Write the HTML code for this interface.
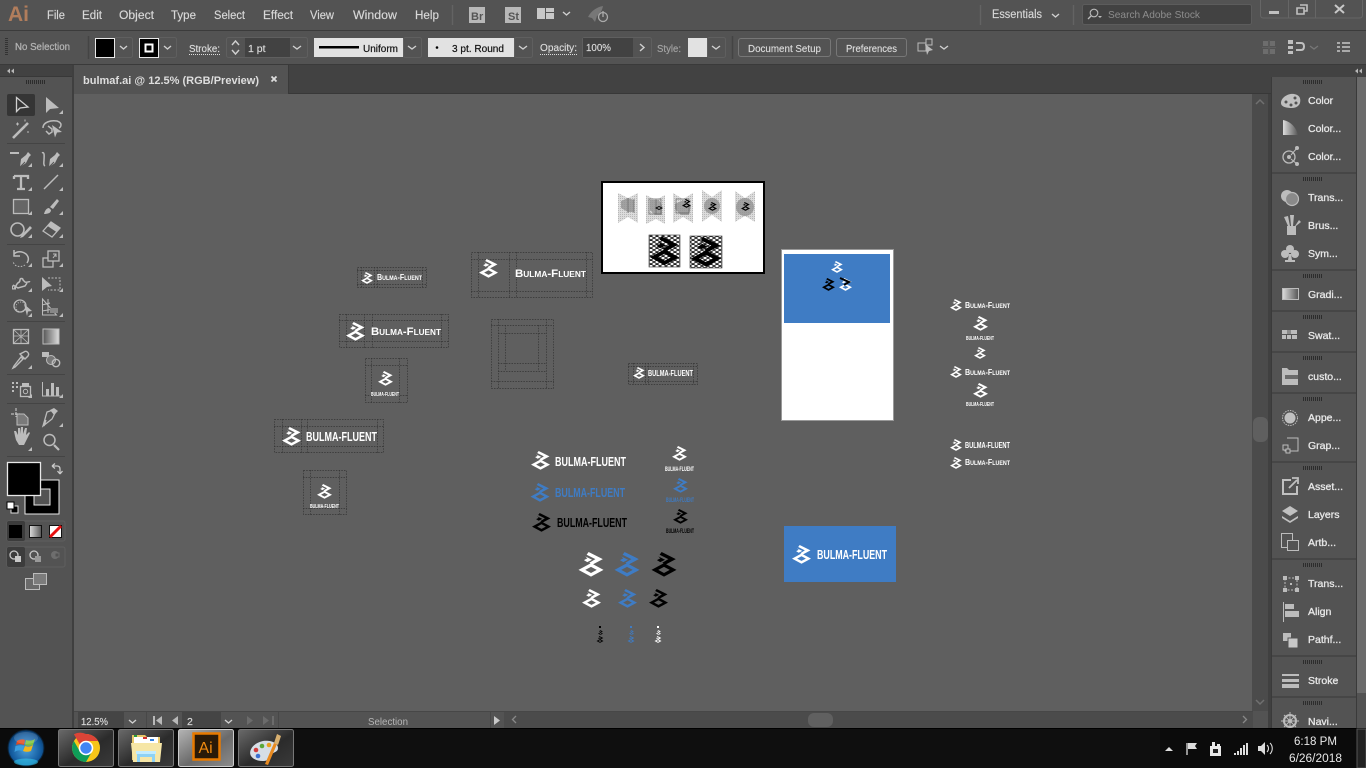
<!DOCTYPE html>
<html><head><meta charset="utf-8"><style>
html,body{margin:0;padding:0;background:#535353;overflow:hidden;width:1366px;height:768px}
svg{display:block}
text{font-family:"Liberation Sans",sans-serif;white-space:pre}
.m{font-size:11.5px;fill:#d8d8d8;stroke:#d8d8d8;stroke-width:.15}
.c{font-size:10.5px;fill:#dcdcdc;stroke:#dcdcdc;stroke-width:.15}
.k{font-size:10.5px;fill:#111;stroke:#111;stroke-width:.2}
.p{font-size:10.5px;fill:#e8e8e8;stroke:#e8e8e8;stroke-width:.3}
.l{font-weight:bold}
.sc{font-variant:small-caps;font-weight:bold}
.g{fill:none;stroke:#343434;stroke-width:.7;stroke-dasharray:1.5 1.2}
.i{fill:none;stroke:#bcbcbc;stroke-width:1.5}
.f{fill:#bcbcbc}
.d{fill:none;stroke:#d0d0d0;stroke-width:1.4}
.hd{stroke:#2c2c2c;stroke-width:4;stroke-dasharray:1 1;fill:none}
</style></head><body>
<svg width="1366" height="768" viewBox="0 0 1366 768" xmlns="http://www.w3.org/2000/svg">
<defs>
<symbol id="m" viewBox="0 0 74 74"><path fill-rule="evenodd" d="M0 53L37 33 74 53 37 73ZM20 53L37 44 54 53 37 62Z"/><path d="M30 0L72 21 42 37 32 32 50 21 24 8ZM20 13L40 23 26 30 16 24 26 19Z"/></symbol>
<pattern id="hatch" width="2" height="2" patternUnits="userSpaceOnUse"><rect width="2" height="2" fill="#dcdcdc"/><rect width="1" height="1" fill="#b8b8b8"/></pattern>
<pattern id="chk" width="6" height="4" patternUnits="userSpaceOnUse"><rect width="6" height="4" fill="#fff"/><path d="M0 2L3 0 6 2 3 4Z" fill="none" stroke="#222" stroke-width="1"/></pattern>
<linearGradient id="gr" x1="0" x2="1"><stop offset="0" stop-color="#ddd"/><stop offset="1" stop-color="#555"/></linearGradient>
<linearGradient id="gr2" x1="0" x2="1"><stop offset="0" stop-color="#555"/><stop offset="1" stop-color="#ddd"/></linearGradient>
<linearGradient id="tb" x1="0" y1="0" x2="1" y2="1"><stop offset="0" stop-color="#6a6a6a"/><stop offset=".55" stop-color="#2b2b2b"/><stop offset="1" stop-color="#3a3a3a"/></linearGradient>
<linearGradient id="tb2" x1="0" y1="0" x2="1" y2="1"><stop offset="0" stop-color="#b4b4b4"/><stop offset=".55" stop-color="#6a6a6a"/><stop offset="1" stop-color="#8c8c8c"/></linearGradient>
<radialGradient id="orb" cx=".5" cy=".55" r=".6"><stop offset="0" stop-color="#4aa0dc"/><stop offset=".7" stop-color="#125a9e"/><stop offset="1" stop-color="#0b2f55"/></radialGradient>
</defs>

<!-- base -->
<rect width="1366" height="768" fill="#535353"/>
<rect y="30" width="1366" height="1" fill="#3b3b3b"/>
<rect y="64" width="1366" height="1" fill="#3a3a3a"/>
<rect x="72" y="65" width="1199" height="29" fill="#424242"/>
<rect x="72" y="93" width="1199" height="1" fill="#383838"/>
<rect x="74" y="65" width="214" height="29" fill="#535353"/>
<rect x="288" y="65" width="1" height="29" fill="#3a3a3a"/>
<rect x="74" y="94" width="1179" height="617" fill="#5f5f5f"/>
<rect x="72" y="65" width="2" height="663" fill="#3f3f3f"/>
<rect x="0" y="65" width="72" height="12" fill="#424242"/>
<rect x="0" y="76" width="72" height="1" fill="#383838"/>
<rect x="1252" y="94" width="16" height="617" fill="#4b4b4b"/>
<rect x="1268" y="94" width="3" height="634" fill="#404040"/>
<rect x="1253" y="417" width="15" height="25" rx="6" fill="#5f5f5f"/>
<path d="M1256 104l4-4 4 4M1256 700l4 4 4-4" fill="none" stroke="#707070" stroke-width="1.5"/>
<rect x="1271" y="65" width="95" height="12" fill="#424242"/>
<rect x="1271" y="77" width="86" height="651" fill="#535353"/>
<rect x="1271" y="77" width="1" height="651" fill="#3a3a3a"/>
<rect x="1356" y="77" width="1" height="651" fill="#3a3a3a"/>
<rect x="1357" y="77" width="9" height="616" fill="#6b6b6b"/>
<path d="M1272 173h84M1272 270h84M1272 311h84M1272 352h84M1272 393h84M1272 462h84M1272 559h84M1272 656h84M1272 697h84" stroke="#3a3a3a"/>

<!-- top bar -->
<text x="8" y="21" font-size="21" fill="#b17d5c" style="font-weight:bold">Ai</text>
<text class="m" x="47" y="19" textLength="18" lengthAdjust="spacingAndGlyphs">File</text>
<text class="m" x="82" y="19" textLength="20" lengthAdjust="spacingAndGlyphs">Edit</text>
<text class="m" x="119" y="19" textLength="35" lengthAdjust="spacingAndGlyphs">Object</text>
<text class="m" x="171" y="19" textLength="25" lengthAdjust="spacingAndGlyphs">Type</text>
<text class="m" x="214" y="19" textLength="31" lengthAdjust="spacingAndGlyphs">Select</text>
<text class="m" x="263" y="19" textLength="30" lengthAdjust="spacingAndGlyphs">Effect</text>
<text class="m" x="310" y="19" textLength="24" lengthAdjust="spacingAndGlyphs">View</text>
<text class="m" x="353" y="19" textLength="44" lengthAdjust="spacingAndGlyphs">Window</text>
<text class="m" x="415" y="19" textLength="24" lengthAdjust="spacingAndGlyphs">Help</text>
<path d="M452.5 5v20M980.5 5v20M1073.5 5v20" stroke="#636363" stroke-width="1.5"/>
<rect x="469" y="7" width="16" height="16" fill="#b8b8b8"/><text x="471" y="20" font-size="11" fill="#555" style="font-weight:bold">Br</text>
<rect x="505" y="7" width="16" height="16" fill="#b8b8b8"/><text x="508" y="20" font-size="11" fill="#555" style="font-weight:bold">St</text>
<path d="M537 8h8v11h-8zM546 8h8v4h-8zM546 13h8v6h-8z" fill="#c8c8c8"/>
<path d="M563 12l3.500 3 3.500-3" class="d"/>
<path d="M588 17c3-6 9-10 15-11-1 5-3 8-6 10l-2 6-3-4-4-1z" fill="#777"/>
<circle cx="603" cy="17" r="4.500" fill="#535353" stroke="#aaa" stroke-width="1.300"/><path d="M603 11v6" stroke="#aaa" stroke-width="1.300"/>
<text class="m" x="992" y="18" textLength="50" lengthAdjust="spacingAndGlyphs">Essentials</text>
<path d="M1052 14l3.500 3 3.500-3" class="d"/>
<rect x="1082.500" y="4.500" width="169" height="20" rx="2" fill="#424242" stroke="#5c5c5c"/>
<circle cx="1094" cy="13" r="3.800" fill="none" stroke="#bbb" stroke-width="1.100"/><path d="M1091 16l-3 3" stroke="#bbb" stroke-width="1.300"/><path d="M1098 16h4l-2 2z" fill="#bbb"/>
<text x="1108" y="18" font-size="10.500" fill="#8d8d8d" textLength="92" lengthAdjust="spacingAndGlyphs">Search Adobe Stock</text>
<path d="M1260.500 0v15q0 3 3 3h96q3 0 3-3V0M1288.500 0v18M1315.500 0v18" fill="none" stroke="#666"/>
<rect x="1269" y="11" width="10" height="3" fill="#c0c0c0"/>
<path d="M1297 8h7v6h-7zM1300 5h7v6h-3" fill="none" stroke="#c0c0c0" stroke-width="1.600"/>
<path d="M1335 5l9 8M1344 5l-9 8" stroke="#c8c8c8" stroke-width="2"/>

<!-- control bar -->
<path d="M6.500 38v18" stroke="#333" stroke-width="3" stroke-dasharray="1 1"/>
<text x="15" y="50" font-size="10.500" fill="#b4b4b4" stroke="#b4b4b4" stroke-width=".25" textLength="55" lengthAdjust="spacingAndGlyphs">No Selection</text>
<path d="M88.500 36v23M732.500 36v23" stroke="#444" stroke-width="1.500"/>
<rect x="114.500" y="37.500" width="18" height="20" rx="2" fill="none" stroke="#5f5f5f"/>
<rect x="95.500" y="38.500" width="19" height="19" fill="#000" stroke="#e8e8e8"/>
<path d="M120 46l3.500 3 3.500-3" class="d"/>
<rect x="158.500" y="37.500" width="18" height="20" rx="2" fill="none" stroke="#5f5f5f"/>
<rect x="139.500" y="38.500" width="19" height="19" fill="#000" stroke="#e8e8e8"/>
<rect x="145.500" y="44.500" width="7" height="7" fill="none" stroke="#fff" stroke-width="2"/>
<path d="M164 46l3.500 3 3.500-3" class="d"/>
<text class="c" x="189" y="52" textLength="31" lengthAdjust="spacingAndGlyphs">Stroke:</text>
<path d="M189 54.500h31M540 54.500h37" stroke="#ddd" stroke-dasharray="1 1"/>
<rect x="226.500" y="37.500" width="81" height="20" rx="2" fill="#535353" stroke="#5f5f5f"/>
<rect x="245" y="38" width="45" height="19" fill="#424242"/>
<path d="M232 45l3.500-4 3.500 4M232 50l3.500 4 3.500-4M293 46l4 3 4-3" class="d"/>
<text class="c" x="248" y="52">1 pt</text>
<rect x="314" y="38" width="89" height="19" fill="#e2e2e2"/>
<rect x="319" y="46" width="40" height="2.500" fill="#000"/>
<text class="k" x="363" y="52" textLength="35" lengthAdjust="spacingAndGlyphs">Uniform</text>
<rect x="403.500" y="37.500" width="18" height="20" rx="2" fill="none" stroke="#5f5f5f"/>
<path d="M408 46l4 3 4-3" class="d"/>
<rect x="428" y="38" width="86" height="19" fill="#e2e2e2"/>
<circle cx="437" cy="47.500" r="1.300" fill="#000"/>
<text class="k" x="452" y="52" textLength="52" lengthAdjust="spacingAndGlyphs">3 pt. Round</text>
<rect x="514.500" y="37.500" width="18" height="20" rx="2" fill="none" stroke="#5f5f5f"/>
<path d="M519 46l4 3 4-3" class="d"/>
<text class="c" x="540" y="51" textLength="37" lengthAdjust="spacingAndGlyphs">Opacity:</text>
<rect x="582.500" y="37.500" width="69" height="20" rx="2" fill="#535353" stroke="#5f5f5f"/>
<rect x="583" y="38" width="50" height="19" fill="#424242"/>
<text class="c" x="586" y="51" textLength="25" lengthAdjust="spacingAndGlyphs">100%</text>
<path d="M640 44l4 3.500-4 3.500" class="d"/>
<text x="657" y="52" font-size="10.500" fill="#a5a5a5" stroke="#a5a5a5" stroke-width=".15" textLength="24" lengthAdjust="spacingAndGlyphs">Style:</text>
<rect x="688" y="38" width="19" height="19" fill="#e2e2e2"/>
<rect x="707.500" y="37.500" width="18" height="20" rx="2" fill="none" stroke="#5f5f5f"/>
<path d="M712 46l4 3 4-3" class="d"/>
<rect x="738.500" y="38.500" width="92" height="18" rx="2.500" fill="none" stroke="#777"/>
<text class="c" x="748" y="52" textLength="73" lengthAdjust="spacingAndGlyphs">Document Setup</text>
<rect x="836.500" y="38.500" width="70" height="18" rx="2.500" fill="none" stroke="#777"/>
<text class="c" x="846" y="52" textLength="51" lengthAdjust="spacingAndGlyphs">Preferences</text>
<path d="M918 43h8v8h-8zM926 39h6v6h-6z" fill="none" stroke="#bbb"/><path d="M925 44l8 6-4 1-2 4z" fill="#bbb"/>
<path d="M940 46l4 3 4-3" class="d"/>
<path d="M1263 41h5v5h-5zM1270 41h5v5h-5zM1263 49h5v5h-5zM1270 49h5v5h-5z" fill="#6d6d6d"/><path d="M1262 47.500h14M1269 40v15" stroke="#5f5f5f"/>
<path d="M1288 40h5v4h-5zM1288 46h5v3h-5zM1288 51h5v3h-5z" fill="#c0c0c0"/><path d="M1296 43h5q3 0 3 3.500t-3 3.500h-5" fill="none" stroke="#c0c0c0" stroke-width="2"/>
<path d="M1310 46l4 3 4-3" fill="none" stroke="#777" stroke-width="1.300"/>
<path d="M1337 43h3M1342 43h8M1337 47h3M1342 47h8M1337 51h3M1342 51h8" stroke="#c8c8c8" stroke-width="1.500"/>

<!-- tab row -->
<text x="83" y="84" font-size="11" fill="#dedede" style="font-weight:bold" textLength="176" lengthAdjust="spacingAndGlyphs">bulmaf.ai @ 12.5% (RGB/Preview)</text>
<path d="M271.500 76.500l5 5M276.500 76.500l-5 5" stroke="#dedede" stroke-width="1.800"/>
<path d="M10 68.500l-3 2.500 3 2.500zM14 68.500l-3 2.500 3 2.500zM1358 68.500l-3 2.500 3 2.500zM1362 68.500l-3 2.500 3 2.500z" fill="#b8b8b8"/>
<path class="hd" d="M26 82h19"/>

<!-- toolbox -->
<rect x="7" y="94" width="28" height="22" rx="2" fill="#353535"/>
<path d="M16.500 97.500v14l3.500-3.500 8-1z" fill="none" stroke="#d0d0d0" stroke-width="1.300"/>
<path d="M46 97v16l4-4 9-1z" fill="#bcbcbc"/>
<path d="M13 138l12-12" stroke="#bcbcbc" stroke-width="2.600"/><path d="M25 126l3-3" stroke="#bcbcbc" stroke-width="2.600"/><path d="M16 124h3M17.500 122.500v3M27 132h2M25 119.500v2" stroke="#bcbcbc"/>
<path d="M43 128c0-6 8-8 14-7 6 2 4 6 2 7M48 126l4 3v3l-3 2-3-3" class="i" stroke-width="1.200"/><path d="M52 125l10 7-5 .5-2 5z" fill="#bcbcbc"/>
<path d="M10 153h9" stroke="#bcbcbc" stroke-width="2"/><path d="M20 167l1-8 5-4 2-3 3 3-2 2-3 6z" fill="#bcbcbc"/><path d="M20 167l5-5" stroke="#535353"/>
<path d="M42 153c3-2 2 5 2 7s-1 5 1 6" class="i" stroke-width="1.200"/><path d="M49 167l1-8 5-4 2-3 3 3-2 2-3 6z" fill="#bcbcbc"/><path d="M49 167l5-5" stroke="#535353"/>
<path d="M14 176h14v3M21 176v13M17 189h8M14 176v3" fill="none" stroke="#bcbcbc" stroke-width="2.300"/>
<path d="M44 189l14-14" stroke="#bcbcbc" stroke-width="1.500"/>
<rect x="13.500" y="199.500" width="15" height="14" fill="#666" stroke="#bcbcbc" stroke-width="1.300"/>
<path d="M44 214c1-4 3-6 5-6l2 2c0 3-3 4-7 4zM50 207l7-8 2 2-6 8z" fill="#bcbcbc"/>
<circle cx="17.500" cy="229.500" r="6.500" fill="none" stroke="#bcbcbc" stroke-width="1.600"/><path d="M21 236l9-10 2 2-9 9-3 1z" fill="#bcbcbc"/>
<path d="M43 231l8-9 9 6-8 9z" fill="none" stroke="#bcbcbc" stroke-width="1.300"/><path d="M47.500 226l4-4 9 6-4 4z" fill="#bcbcbc"/>
<path d="M14 254c3-3 8-3 12 0 3 3 3 6 1 9" class="i"/><path d="M14 250v6h6" class="i" stroke-width="1.300"/><path d="M25 265c-3 2-7 2-10 0-1-1-2-3-2-4" fill="none" stroke="#bcbcbc" stroke-dasharray="1.500 1.500"/>
<rect x="43" y="258" width="10" height="9" fill="none" stroke="#bcbcbc" stroke-width="1.300"/><rect x="48" y="251" width="11" height="10" fill="#535353" stroke="#bcbcbc" stroke-width="1.300"/><path d="M53 258l3-4M53 254h3v3" fill="none" stroke="#bcbcbc"/>
<path d="M14 289l3-5c1-2 3-1 3-4 0-2 3-2 3 0l2 2c2 1 4-1 5 0" class="i"/><path d="M13 285l5 3 7-2 2-3" class="i" stroke-width="1"/><rect x="12.500" y="286" width="3" height="3" fill="none" stroke="#bcbcbc"/>
<path d="M42 277v14l5-4 5-1z" fill="#bcbcbc"/><path d="M48 278h12v12h-12" fill="none" stroke="#bcbcbc" stroke-dasharray="2 1.500"/>
<circle cx="20" cy="306" r="6" fill="none" stroke="#bcbcbc" stroke-width="1.300"/><circle cx="21" cy="307" r="5" fill="none" stroke="#bcbcbc" stroke-dasharray="1 1.500"/><path d="M24 304l8 7-4 .5-1 4.500z" fill="#bcbcbc"/>
<path d="M42.500 299v16h14l-14-16zM42 305l8-2M42 311l12-2M48 299v14" fill="none" stroke="#bcbcbc"/><path d="M50 308h8v5h-8z" fill="#888"/>
<rect x="13.500" y="329.500" width="15" height="14" fill="none" stroke="#bcbcbc" stroke-width="1.300"/><path d="M13 336h16M21 329v15M14 330l14 13M28 330l-14 13" stroke="#bcbcbc" stroke-width=".8"/>
<rect x="43" y="329" width="16" height="15" fill="url(#gr2)" stroke="#bcbcbc"/>
<path d="M14 366l-1 2 2-1 8-8-2-2zM20 354l5 5 3-3c2-3-2-6-4-4z" fill="none" stroke="#bcbcbc" stroke-width="1.400"/>
<path d="M42 352h7v5h-7z" fill="#bcbcbc"/><circle cx="51" cy="360" r="4.500" fill="#777" stroke="#bcbcbc"/><circle cx="56" cy="363" r="3.700" fill="none" stroke="#bcbcbc" stroke-width="1.400"/>
<rect x="20.500" y="386.500" width="10" height="10" fill="none" stroke="#bcbcbc" stroke-width="1.300"/><circle cx="25.500" cy="391.500" r="2.200" fill="none" stroke="#bcbcbc"/><path d="M22 383h7v3h-7zM12 382h2v2h-2zM16 382h2v2h-2zM12 386h2v2h-2zM16 386h2v2h-2zM12 390h2v2h-2z" fill="#bcbcbc"/>
<path d="M42.500 382v14h18" fill="none" stroke="#bcbcbc"/><path d="M46 389h3v7h-3zM51 383h3v13h-3zM56 387h3v9h-3z" fill="#bcbcbc"/>
<path d="M11 414h9M16 408v9" stroke="#bcbcbc" stroke-width="1.200" stroke-dasharray="3 1"/><path d="M17 414h7l4 4v7H17z" fill="#7a7a7a" stroke="#bcbcbc"/>
<path d="M43 426l4-14 6-2 2 3-3 6zM46 420l-2 6" fill="none" stroke="#bcbcbc" stroke-width="1.300"/><path d="M50 410l4-2 4 3-4 4z" fill="#bcbcbc"/>
<path d="M15 436l-1-5 2 0 2 4v-7h2v6l1-7h2l0 7 2-6h2l-1 7 3-3 1 1-4 8-2 4h-5l-3-5z" fill="#bcbcbc"/>
<circle cx="49.500" cy="440" r="5.500" fill="none" stroke="#bcbcbc" stroke-width="1.500"/><path d="M54 445l5 5" stroke="#bcbcbc" stroke-width="2.200"/>
<path d="M32 167v-4l-4 4zM63 167v-4l-4 4zM32 191v-4l-4 4zM63 191v-4l-4 4zM32 215v-4l-4 4zM63 215v-4l-4 4zM32 238v-4l-4 4zM63 238v-4l-4 4zM32 267v-4l-4 4zM63 267v-4l-4 4zM32 292v-4l-4 4zM63 292v-4l-4 4zM32 317v-4l-4 4zM63 317v-4l-4 4zM32 369v-4l-4 4zM32 398v-4l-4 4zM63 398v-4l-4 4zM63 427v-4l-4 4zM32 451v-4l-4 4zM63 114v-4l-4 4z" fill="#bcbcbc"/>
<path d="M7 143.500h58M7 244.500h58M7 321.500h58M7 374.500h58M7 403.500h58M7 456.500h58" stroke="#444"/>
<!-- colour -->
<rect x="25" y="480" width="34" height="34" fill="#000" stroke="#e8e8e8"/>
<rect x="34" y="489" width="16" height="16" fill="#535353" stroke="#e8e8e8"/>
<rect x="7.500" y="462.500" width="33" height="33" fill="#000" stroke="#e8e8e8" stroke-width="1.300"/>
<path d="M52 466h5q3 0 3 3v5M52 466l3-2.500M52 466l3 2.500M60 474l-2.500-3M60 474l2.500-3" fill="none" stroke="#c8c8c8" stroke-width="1.300"/>
<rect x="11" y="506" width="7" height="7" fill="#000" stroke="#ddd"/><rect x="7" y="502" width="7" height="7" fill="#fff" stroke="#000"/>
<rect x="7" y="521" width="58" height="20" rx="2" fill="none" stroke="#5f5f5f"/>
<rect x="7" y="521" width="18" height="20" rx="2" fill="#3c3c3c"/>
<rect x="9" y="525" width="13" height="13" fill="#000"/>
<rect x="29.500" y="525.500" width="12" height="12" fill="url(#gr)" stroke="#111"/>
<rect x="49.500" y="525.500" width="12" height="12" fill="#fff" stroke="#111"/><path d="M50 537l11-11" stroke="#e81010" stroke-width="3"/>
<rect x="7" y="547" width="58" height="20" rx="2" fill="none" stroke="#5f5f5f"/>
<rect x="7" y="547" width="18" height="20" rx="2" fill="#3c3c3c"/>
<circle cx="14" cy="555" r="4" fill="none" stroke="#c8c8c8" stroke-width="1.300"/><rect x="15" y="556" width="6" height="6" fill="#c8c8c8"/>
<circle cx="34" cy="555" r="4" fill="none" stroke="#c8c8c8" stroke-width="1.300"/><rect x="35" y="556" width="6" height="6" fill="#999"/>
<circle cx="55" cy="555" r="4" fill="#6e6e6e"/><rect x="55" y="553" width="4" height="4" fill="#535353" stroke="#6e6e6e"/>
<rect x="25.500" y="578.500" width="14" height="11" fill="#6a6a6a" stroke="#bcbcbc"/><rect x="33.500" y="573.500" width="13" height="11" fill="#7c7c7c" stroke="#bcbcbc"/>

<!-- panel handles -->
<path class="hd" d="M1303 82h19M1303 179h19M1303 276h19M1303 317h19M1303 358h19M1303 399h19M1303 468h19M1303 565h19M1303 662h19M1303 703h19"/>
<!-- panel labels -->
<text class="p" x="1308" y="104">Color</text>
<text class="p" x="1308" y="132">Color...</text>
<text class="p" x="1308" y="160">Color...</text>
<text class="p" x="1308" y="201">Trans...</text>
<text class="p" x="1308" y="229">Brus...</text>
<text class="p" x="1308" y="257">Sym...</text>
<text class="p" x="1308" y="298">Gradi...</text>
<text class="p" x="1308" y="339">Swat...</text>
<text class="p" x="1308" y="380">custo...</text>
<text class="p" x="1308" y="421">Appe...</text>
<text class="p" x="1308" y="449">Grap...</text>
<text class="p" x="1308" y="490">Asset...</text>
<text class="p" x="1308" y="518">Layers</text>
<text class="p" x="1308" y="546">Artb...</text>
<text class="p" x="1308" y="587">Trans...</text>
<text class="p" x="1308" y="615">Align</text>
<text class="p" x="1308" y="643">Pathf...</text>
<text class="p" x="1308" y="684">Stroke</text>
<text class="p" x="1308" y="725">Navi...</text>
<!-- panel icons -->
<path d="M1281 103c0-6 8-10 13-9 6 1 7 5 6 9-1 3-4 5-8 5-5 0-11-1-11-5z" fill="#c0c0c0"/><circle cx="1286" cy="102" r="1.500" fill="#535353"/><circle cx="1291" cy="105" r="1.500" fill="#535353"/><circle cx="1296" cy="103" r="1.500" fill="#535353"/><circle cx="1295" cy="98" r="1.500" fill="#535353"/>
<path d="M1283 120c6 1 13 6 15 15h-15z" fill="url(#gr)"/>
<circle cx="1289" cy="157" r="6" fill="none" stroke="#bcbcbc" stroke-width="1.300"/><circle cx="1289" cy="157" r="2" fill="#bcbcbc"/><path d="M1291 155l6-7M1291 159l6 5" stroke="#bcbcbc"/><circle cx="1297" cy="148" r="2" fill="#bcbcbc"/><circle cx="1297" cy="164" r="2" fill="#bcbcbc"/>
<circle cx="1287" cy="196" r="6" fill="#bcbcbc"/><circle cx="1292" cy="199" r="6.500" fill="#8a8a8a" stroke="#bcbcbc" stroke-width="1.200"/>
<path d="M1287 226h9v9h-9zM1284 217l4 9h2l-2-10zM1290 215l1 11h2l1-11zM1299 220l-4 6h1l5-4z" fill="#bcbcbc"/>
<circle cx="1290" cy="249" r="4" fill="#bcbcbc"/><circle cx="1285" cy="254" r="4" fill="#bcbcbc"/><circle cx="1295" cy="254" r="4" fill="#bcbcbc"/><path d="M1289 254h2l1 6h3v2h-10v-2h3z" fill="#bcbcbc"/>
<rect x="1282.500" y="288.500" width="16" height="11" fill="url(#gr)" stroke="#bcbcbc"/>
<path d="M1282 330h15v4h-15zM1282 335h4v4h-4zM1287 335h4v4h-4zM1292 335h5v4h-5z" fill="#bcbcbc"/><path d="M1287 330h4v4h-4z" fill="#8a8a8a"/>
<path d="M1282 368h5l2 2h9v15h-16z" fill="#bcbcbc"/><rect x="1285" y="375" width="13" height="4" fill="#6a6a6a"/>
<circle cx="1290" cy="418" r="5.500" fill="#c0c0c0"/><circle cx="1290" cy="418" r="7.500" fill="none" stroke="#bcbcbc" stroke-dasharray="1.500 1"/>
<path d="M1287 438h11v13h-13v-5" fill="none" stroke="#bcbcbc"/><rect x="1283" y="445" width="5" height="5" fill="#535353" stroke="#bcbcbc"/><rect x="1286" y="449" width="4" height="4" fill="#535353" stroke="#bcbcbc"/>
<path d="M1291 480h-8v14h14v-8" fill="none" stroke="#c0c0c0" stroke-width="2"/><path d="M1289 488l8-8M1292 478h6v6" fill="none" stroke="#c0c0c0" stroke-width="1.800"/>
<path d="M1290 506l8 5-8 5-8-5z" fill="#c0c0c0"/><path d="M1282 516l8 5 8-5v2l-8 5-8-5z" fill="#c0c0c0"/>
<rect x="1281.500" y="533.500" width="11" height="14" fill="none" stroke="#bcbcbc"/><rect x="1287.500" y="540.500" width="11" height="10" fill="#535353" stroke="#bcbcbc"/>
<path d="M1285 578h12v12h-12z" fill="none" stroke="#bcbcbc" stroke-dasharray="2 1.500"/><path d="M1283 576h4v4h-4zM1295 576h4v4h-4zM1283 588h4v4h-4zM1295 588h4v4h-4zM1290 583h2v2h-2z" fill="#bcbcbc"/>
<path d="M1283.500 602v20" stroke="#bcbcbc"/><path d="M1285 604h9v5h-9zM1285 611h14v6h-14z" fill="#bcbcbc"/>
<path d="M1283 633h8v8h-8z" fill="#bcbcbc"/><path d="M1288 638h10v10h-10z" fill="#c8c8c8" stroke="#535353"/>
<path d="M1282 674h17v2h-17zM1282 679h17v3h-17zM1282 684h17v4h-17z" fill="#bcbcbc"/>
<circle cx="1290" cy="721" r="6" fill="none" stroke="#bcbcbc" stroke-width="2"/><circle cx="1290" cy="721" r="2" fill="#bcbcbc"/><path d="M1290 712v18M1281 721h18M1284 715l12 12M1296 715l-12 12" stroke="#bcbcbc"/>

<!-- status bar -->
<rect x="74" y="711" width="1179" height="17" fill="#535353"/>
<rect x="74" y="711" width="1179" height="1" fill="#474747"/>
<rect x="78" y="712" width="46" height="16" fill="#454545"/>
<rect x="182" y="712" width="39" height="16" fill="#454545"/>
<text class="c" x="81" y="725" textLength="27" lengthAdjust="spacingAndGlyphs">12.5%</text>
<text class="c" x="187" y="725">2</text>
<path d="M129 720l3.500 3 3.500-3M225 720l3.500 3 3.500-3" class="d"/>
<path d="M153 716h2v9h-2zM162 716v9l-6-4.500zM178 716v9l-6-4.500z" fill="#b8b8b8"/>
<path d="M247 716l6 4.500-6 4.500zM263 716l6 4.500-6 4.500zM272 716h2v9h-2z" fill="#6b6b6b"/>
<path d="M278.500 712v16M146.500 712v16M490.500 712v16" stroke="#484848"/>
<text x="368" y="725" font-size="10.500" fill="#b5b5b5" textLength="40" lengthAdjust="spacingAndGlyphs">Selection</text>
<path d="M494 716l6 4.500-6 4.500z" fill="#c8c8c8"/>
<rect x="504" y="712" width="749" height="16" fill="#4b4b4b"/>
<rect x="808" y="713" width="25" height="14" rx="6" fill="#606060"/>
<path d="M516 716l-3.500 3.500 3.500 3.500M1243 716l3.500 3.500-3.500 3.500" fill="none" stroke="#888" stroke-width="1.300"/>

<!-- canvas: artboards -->
<rect x="602" y="182" width="162" height="91" fill="#fff" stroke="#000" stroke-width="2"/>
<g fill="url(#hatch)"><path d="M618 193l10 5 10-5v30l-10-6-10 6z"/><path d="M646 195l10 5 9-5v29l-9-5-10 5z"/><path d="M673 193l10 6 10-6v30l-10-6-10 6z"/><path d="M702 190l10 7 10-7v32l-10-7-10 7z"/><path d="M735 191l10 7 10-7v31l-10-6-10 6z"/></g>
<g fill="#8d8d8d" fill-opacity=".75"><path d="M621 201l7-3 6 2v12h-6l-7-4z"/><path d="M650 200h9l3 5v10h-7l-5-5z"/><path d="M675 204l8-4 8 6-2 9h-8l-6-6z"/><circle cx="712" cy="206" r="8"/><circle cx="745" cy="207" r="9"/></g>
<path d="M628 198v15M634 199v14M649 199h12v15h-12zM656 199v15M676 199h13v14h-13z" fill="none" stroke="#666" stroke-width=".7"/>
<use href="#m" x="682" y="199" width="9" height="9"/>
<path fill-rule="evenodd" d="M655 208l4-2 4 2-4 2zM657 208l2 1 2-1-2-1z"/>
<use href="#m" x="708" y="202" width="9" height="9"/><use href="#m" x="741" y="202" width="9" height="9"/>
<rect x="649" y="235" width="31" height="32" fill="url(#chk)" stroke="#333" stroke-width=".6"/><use href="#m" x="650" y="236" width="29" height="30"/>
<rect x="690" y="236" width="32" height="32" fill="url(#chk)" stroke="#333" stroke-width=".6"/><use href="#m" x="691" y="237" width="30" height="30"/>

<rect x="781.500" y="249.500" width="112" height="171" fill="#fff" stroke="#999"/>
<rect x="784" y="254" width="106" height="69" fill="#3f7cc4"/>
<use href="#m" x="831" y="261" width="12" height="12" fill="#fff"/>
<use href="#m" x="822" y="278" width="13" height="13" fill="#000"/>
<use href="#m" x="839" y="278" width="13" height="13" fill="#fff"/>
<path d="M840 278l9 4-5 3" fill="none" stroke="#000" stroke-width="2"/>

<rect x="784" y="526" width="112" height="56" fill="#3f7cc4"/>
<use href="#m" x="792" y="545" width="19" height="19" fill="#fff"/>
<text class="l" x="817" y="559" font-size="12.500" fill="#fff" textLength="70" lengthAdjust="spacingAndGlyphs">BULMA-FLUENT</text>

<!-- guides -->
<g class="g">
<path class="g" d="M357.500 267.500h69v20h-69zM361.500 267v21M374.500 267v21M377.500 267v21M422.500 267v21M357 270.500h70M357 284.500h70"/>
<path class="g" d="M471.500 252.500h121v45h-121zM478.500 252v46M509.500 252v46M516.500 252v46M586.500 252v46M471 259.500h122M471 291.500h122"/>
<path class="g" d="M339.500 314.500h109v33h-109zM346.500 314v34M364.500 314v34M372.500 314v34M441.500 314v34M339 320.500h110M339 341.500h110"/>
<path class="g" d="M365.500 358.500h42v44h-42zM371.500 358v45M399.500 358v45M365 365.500h43M365 395.500h43"/>
<path class="g" d="M491.500 319.500h62v69h-62zM498.500 319v70M505.500 325v46M538.500 325v46M546.500 319v70M491 325.500h63M498 333.500h48M498 363.500h48M498 371.500h48M491 381.500h63"/>
<path class="g" d="M274.500 419.500h109v33h-109zM282.500 419v34M301.500 419v34M307.500 419v34M377.500 419v34M274 426.500h110M274 446.500h110"/>
<path class="g" d="M303.500 470.500h43v44h-43zM310.500 470v45M339.500 470v45M303 477.500h44M303 508.500h44"/>
<path class="g" d="M628.500 363.500h69v21h-69zM633.500 363v22M645.500 363v22M648.500 363v22M693.500 363v22M628 366.500h70M628 381.500h70"/>
</g>

<!-- logos with guides -->
<g fill="#fff">
<use href="#m" x="361" y="272" width="12" height="12"/>
<use href="#m" x="479" y="259" width="19" height="19"/>
<use href="#m" x="346" y="322" width="19" height="19"/>
<use href="#m" x="378" y="371" width="15" height="15"/>
<use href="#m" x="282" y="427" width="19" height="19"/>
<use href="#m" x="317" y="484" width="15" height="15"/>
<use href="#m" x="633" y="367" width="12" height="12"/>
<use href="#m" x="531" y="451" width="19" height="19"/>
<use href="#m" x="672" y="446" width="15" height="15"/>
<use href="#m" x="578" y="552" width="26" height="25"/>
<use href="#m" x="582" y="589" width="19" height="19"/>
<use href="#m" x="950" y="299" width="12" height="12"/>
<use href="#m" x="973" y="316" width="15" height="15"/>
<use href="#m" x="974" y="347" width="12" height="12"/>
<use href="#m" x="950" y="366" width="12" height="12"/>
<use href="#m" x="973" y="383" width="15" height="15"/>
<use href="#m" x="950" y="439" width="12" height="12"/>
<use href="#m" x="950" y="457" width="12" height="12"/>
<rect x="657" y="626" width="2" height="2"/><use href="#m" x="656" y="630" width="5" height="5"/><use href="#m" x="654" y="636" width="8" height="7"/>
</g>
<g fill="#3f7cc4">
<use href="#m" x="530" y="483" width="20" height="19"/>
<use href="#m" x="673" y="478" width="15" height="15"/>
<use href="#m" x="614" y="552" width="26" height="25"/>
<use href="#m" x="618" y="589" width="19" height="19"/>
<rect x="630" y="626" width="2" height="2"/><use href="#m" x="629" y="630" width="5" height="5"/><use href="#m" x="627" y="636" width="8" height="7"/>
</g>
<g fill="#000">
<use href="#m" x="532" y="513" width="19" height="19"/>
<use href="#m" x="673" y="509" width="15" height="15"/>
<use href="#m" x="651" y="552" width="26" height="25"/>
<use href="#m" x="649" y="589" width="19" height="19"/>
<rect x="599" y="626" width="2" height="2"/><use href="#m" x="598" y="630" width="5" height="5"/><use href="#m" x="596" y="636" width="8" height="7"/>
</g>

<!-- wordmarks -->
<g fill="#fff">
<text class="sc" x="377" y="280" font-size="8" textLength="45" lengthAdjust="spacingAndGlyphs">Bulma-Fluent</text>
<text class="sc" x="515" y="277" font-size="11" textLength="71" lengthAdjust="spacingAndGlyphs">Bulma-Fluent</text>
<text class="sc" x="371" y="335" font-size="11" textLength="70" lengthAdjust="spacingAndGlyphs">Bulma-Fluent</text>
<text class="l" x="371" y="396" font-size="5" textLength="28" lengthAdjust="spacingAndGlyphs">BULMA-FLUENT</text>
<text class="l" x="306" y="441" font-size="12.500" textLength="71" lengthAdjust="spacingAndGlyphs">BULMA-FLUENT</text>
<text class="l" x="310" y="508" font-size="5.500" textLength="29" lengthAdjust="spacingAndGlyphs">BULMA-FLUENT</text>
<text class="l" x="648" y="376" font-size="8" textLength="45" lengthAdjust="spacingAndGlyphs">BULMA-FLUENT</text>
<text class="l" x="555" y="466" font-size="12.500" textLength="71" lengthAdjust="spacingAndGlyphs">BULMA-FLUENT</text>
<text class="l" x="665" y="471" font-size="6" textLength="29" lengthAdjust="spacingAndGlyphs">BULMA-FLUENT</text>
<text class="sc" x="965" y="308" font-size="8" textLength="45" lengthAdjust="spacingAndGlyphs">Bulma-Fluent</text>
<text class="l" x="966" y="340" font-size="5" textLength="28" lengthAdjust="spacingAndGlyphs">BULMA-FLUENT</text>
<text class="sc" x="965" y="375" font-size="8" textLength="45" lengthAdjust="spacingAndGlyphs">Bulma-Fluent</text>
<text class="l" x="966" y="406" font-size="5" textLength="28" lengthAdjust="spacingAndGlyphs">BULMA-FLUENT</text>
<text class="l" x="965" y="448" font-size="8" textLength="45" lengthAdjust="spacingAndGlyphs">BULMA-FLUENT</text>
<text class="sc" x="965" y="465" font-size="8" textLength="45" lengthAdjust="spacingAndGlyphs">Bulma-Fluent</text>
</g>
<text class="l" x="555" y="497" font-size="12.500" fill="#3f7cc4" textLength="70" lengthAdjust="spacingAndGlyphs">BULMA-FLUENT</text>
<text class="l" x="666" y="502" font-size="6" fill="#3f7cc4" textLength="28" lengthAdjust="spacingAndGlyphs">BULMA-FLUENT</text>
<text class="l" x="557" y="527" font-size="12.500" fill="#000" textLength="70" lengthAdjust="spacingAndGlyphs">BULMA-FLUENT</text>
<text class="l" x="666" y="533" font-size="6" fill="#000" textLength="28" lengthAdjust="spacingAndGlyphs">BULMA-FLUENT</text>

<!-- taskbar -->
<rect y="728" width="1366" height="40" fill="#0b0b0b"/>
<rect y="728" width="1366" height="1" fill="#000"/>
<rect x="290" y="729" width="870" height="39" fill="#0f0f0f"/>
<circle cx="26" cy="748" r="18" fill="url(#orb)" stroke="#0a2238"/>
<path d="M17 741c3-2 6-2 8-1l-1 5c-3-1-6-1-8 0z" fill="#e04a1f"/><path d="M26 740c3 1 6 1 9-1l-2 6c-3 1-6 1-8 0z" fill="#7cc23e"/><path d="M25 746c3 1 5 1 8-1l-2 6c-3 1-5 1-8 0z" fill="#f2b71b"/><path d="M15.500 746c3-1 6-1 8.500 0l-1.500 5c-3-1-5-1-8 1z" fill="#3a9fe0"/>
<ellipse cx="26" cy="738" rx="12" ry="6" fill="#fff" fill-opacity=".15"/>
<ellipse cx="26" cy="762" rx="12" ry="3.500" fill="#38d0f0" fill-opacity=".55"/>
<rect x="58.500" y="729.500" width="55" height="37" rx="2" fill="url(#tb)" stroke="#777"/>
<rect x="118.500" y="729.500" width="55" height="37" rx="2" fill="url(#tb)" stroke="#777"/>
<rect x="178.500" y="729.500" width="55" height="37" rx="2" fill="url(#tb2)" stroke="#ccc"/>
<rect x="238.500" y="729.500" width="55" height="37" rx="2" fill="url(#tb)" stroke="#777"/>
<!-- chrome -->
<circle cx="86" cy="748" r="14" fill="#f7c518"/>
<path d="M86 734a14 14 0 0 1 12.100 7H86a7 7 0 0 0-6.100 3.500l-6-10.300A14 14 0 0 1 86 734z" fill="#db4437"/>
<path d="M73.900 741a14 14 0 0 0 5.100 19.100 14 14 0 0 0 7 1.900l6-10.500a7 7 0 0 1-12.100 0z" fill="#0f9d58"/>
<circle cx="86" cy="748" r="6.500" fill="#4285f4" stroke="#fff" stroke-width="1.600"/>
<!-- explorer -->
<path d="M132 735h13l2 2h13v23h-28z" fill="#e7c768"/>
<path d="M134 737h24v8h-24z" fill="#fff"/><path d="M134 735h3v2h-3z" fill="#2a9a3a"/>
<path d="M143 737h4v2h-4z" fill="#d03030"/><path d="M150 739h4v2h-4z" fill="#3080e0"/>
<path d="M131 743h31l-2 19h-27z" fill="#f6e6a6"/><path d="M137 762v-9h18v9h-3v-5h-12v5z" fill="#8ed2f5"/><rect x="136" y="751" width="20" height="3" fill="#c2ecff"/>
<!-- ai -->
<rect x="193.500" y="733.500" width="26" height="26" fill="#2a1a08" stroke="#e87a00" stroke-width="2.500"/>
<text x="198.500" y="753" font-size="16" fill="#f08a10">Ai</text>
<!-- palette -->
<path d="M251 756c-3-5 2-13 12-15 8-1 15 2 15 7 0 4-4 4-6 6-1 3-3 7-9 7s-10-2-12-5z" fill="#d6dee6"/>
<circle cx="256" cy="750" r="2.300" fill="#d03a3a"/><circle cx="262" cy="746" r="2.300" fill="#5aa83a"/><circle cx="269" cy="745" r="2.300" fill="#e8a020"/><circle cx="258" cy="756" r="2.300" fill="#3a70d0"/>
<path d="M265 764l9-21 3 1-9 21z" fill="#e88a20"/><path d="M274 743l3-9 4 2-3 9z" fill="#d8b070"/>

<!-- tray -->
<path d="M1165 751l4-4 4 4z" fill="#ddd"/>
<path d="M1187 743v12" stroke="#ddd" stroke-width="1.300"/><path d="M1188 743h9l-2 3 2 3h-9z" fill="#ddd"/>
<path d="M1210 746h11v10h-11z" fill="#e8e8e8"/><path d="M1212 742h3v4h-3zM1217 744h3v3h-3z" fill="#e8e8e8"/><rect x="1213" y="749" width="5" height="4" fill="#222"/>
<path d="M1234 753h2v2h-2zM1237 751h2v4h-2zM1240 748h2v7h-2zM1243 745h2v10h-2zM1246 743h2v12h-2z" fill="#ddd"/>
<path d="M1258 746h3l4-4v13l-4-4h-3z" fill="#ddd"/><path d="M1267 745c2 2 2 5 0 7M1270 743c3 3 3 8 0 11" fill="none" stroke="#ddd" stroke-width="1.100"/>
<text x="1294" y="745" font-size="11.500" fill="#e8e8e8" textLength="43" lengthAdjust="spacingAndGlyphs">6:18 PM</text>
<text x="1289" y="762" font-size="11.500" fill="#e8e8e8" textLength="53" lengthAdjust="spacingAndGlyphs">6/26/2018</text>
<rect x="1357" y="729" width="9" height="39" fill="#222" stroke="#555"/>
</svg>
</body></html>
